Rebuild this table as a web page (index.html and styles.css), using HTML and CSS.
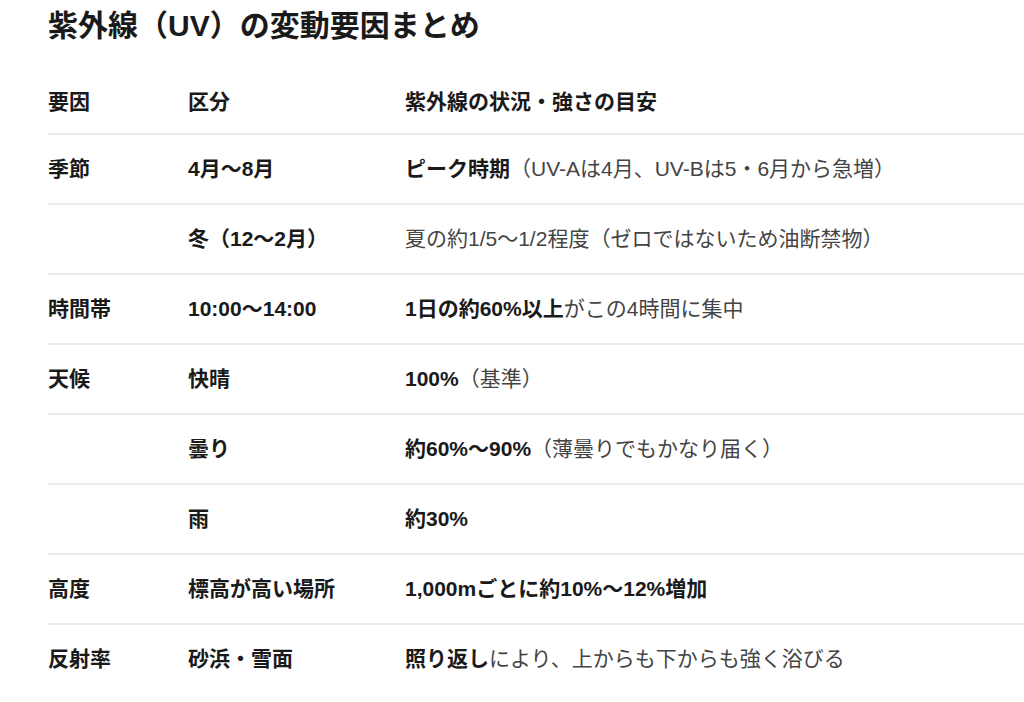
FILE: index.html
```html
<!DOCTYPE html>
<html lang="ja">
<head>
<meta charset="utf-8">
<title>紫外線（UV）の変動要因まとめ</title>
<link rel="stylesheet" href="styles.css">
</head>
<body>
<main class="page">
  <h1 class="title">紫外線（UV）の変動要因まとめ</h1>
  <table class="uv-table">
    <colgroup>
      <col class="c1"><col class="c2"><col class="c3">
    </colgroup>
    <thead>
      <tr><th>要因</th><th>区分</th><th>紫外線の状況・強さの目安</th></tr>
    </thead>
    <tbody>
      <tr><td class="b">季節</td><td class="b">4月～8月</td><td><strong>ピーク時期</strong>（UV-Aは4月、UV-Bは5・6月から急増）</td></tr>
      <tr><td></td><td class="b">冬（12～2月）</td><td>夏の約1/5～1/2程度（ゼロではないため油断禁物）</td></tr>
      <tr><td class="b">時間帯</td><td class="b">10:00～14:00</td><td><strong>1日の約60%以上</strong>がこの4時間に集中</td></tr>
      <tr><td class="b">天候</td><td class="b">快晴</td><td><strong>100%</strong>（基準）</td></tr>
      <tr><td></td><td class="b">曇り</td><td><strong>約60%～90%</strong>（薄曇りでもかなり届く）</td></tr>
      <tr><td></td><td class="b">雨</td><td><strong>約30%</strong></td></tr>
      <tr><td class="b">高度</td><td class="b">標高が高い場所</td><td><strong>1,000mごとに約10%～12%増加</strong></td></tr>
      <tr><td class="b">反射率</td><td class="b">砂浜・雪面</td><td><strong>照り返し</strong>により、上からも下からも強く浴びる</td></tr>
    </tbody>
  </table>
</main>
</body>
</html>
```

FILE: styles.css
```css
html, body {
  margin: 0;
  padding: 0;
  background: #ffffff;
  overflow: hidden;
}

body {
  font-family: "Liberation Sans", "Noto Sans CJK JP", sans-serif;
  color: #444444;
}

.page {
  padding: 0 0 0 48px;
}

.title {
  margin: 0;
  padding-top: 6px;
  font-size: 30px;
  line-height: 40px;
  font-weight: 700;
  color: #1a1a1a;
}

.uv-table {
  margin-top: 25px;
  width: 100%;
  border-collapse: collapse;
  font-size: 21px;
  line-height: 30px;
}

.c1 { width: 140px; }
.c2 { width: 217px; }

.uv-table th {
  text-align: left;
  font-weight: 700;
  color: #1a1a1a;
  padding: 16px 0;
  border-bottom: 2px solid #ebebeb;
  white-space: nowrap;
}

.uv-table td {
  padding: 19px 0;
  border-bottom: 2px solid #ebebeb;
  white-space: nowrap;
  vertical-align: top;
}

.uv-table tbody tr:last-child td {
  border-bottom: none;
}

.uv-table .b,
.uv-table strong {
  font-weight: 700;
  color: #1a1a1a;
}
```
